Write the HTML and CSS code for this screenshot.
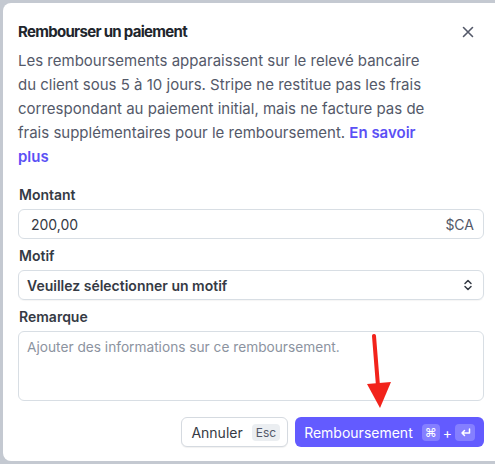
FILE: index.html
```html
<!DOCTYPE html>
<html lang="fr">
<head>
<meta charset="utf-8">
<title>Rembourser un paiement</title>
<link rel="stylesheet" href="styles.css">
</head>
<body>
<div class="dialog">
  <div class="header">
    <h1 class="title">Rembourser un paiement</h1>
    <button class="close" aria-label="Fermer">
      <svg width="12" height="12" viewBox="0 0 12 12"><path d="M1.5 1.5L10.5 10.5M10.5 1.5L1.5 10.5" stroke="#545969" stroke-width="1.6" stroke-linecap="round"/></svg>
    </button>
  </div>
  <p class="desc">Les remboursements apparaissent sur le relevé bancaire du client sous 5 à 10 jours. Stripe ne restitue pas les frais correspondant au paiement initial, mais ne facture pas de frais supplémentaires pour le remboursement. <a class="link" href="#">En savoir plus</a></p>

  <div class="field first">
    <label class="label">Montant</label>
    <div class="input">
      <span class="value">200,00</span>
      <span class="suffix">$CA</span>
    </div>
  </div>

  <div class="field">
    <label class="label">Motif</label>
    <div class="input select">
      <span class="select-text">Veuillez sélectionner un motif</span>
      <svg class="chev" width="10" height="12" viewBox="0 0 10 12"><path d="M2 4.5L5 1.5L8 4.5M2 7.5L5 10.5L8 7.5" fill="none" stroke="#353a44" stroke-width="1.5" stroke-linecap="round" stroke-linejoin="round"/></svg>
    </div>
  </div>

  <div class="field">
    <label class="label">Remarque</label>
    <div class="textarea">Ajouter des informations sur ce remboursement.</div>
  </div>

  <div class="actions">
    <button class="btn secondary">Annuler <span class="kbd">Esc</span></button>
    <button class="btn primary">Remboursement <span class="kbd light">⌘</span><span class="plus">+</span><span class="kbd light">
      <svg width="11" height="9" viewBox="0 0 11 9"><path d="M9.5 1V5H2M4.5 2.5L2 5L4.5 7.5" fill="none" stroke="#fff" stroke-width="1.5" stroke-linecap="round" stroke-linejoin="round"/></svg></span></button>
  </div>

  <svg class="arrow" width="40" height="80" viewBox="0 0 40 80"><path d="M13 2L17 52" stroke="#f2231b" stroke-width="4" stroke-linecap="round"/><path d="M6 50L30 48L19 74Z" fill="#f2231b"/></svg>
</div>
</body>
</html>
```
FILE: styles.css
```css
html, body {
  margin: 0;
  padding: 0;
}
body {
  background: #c4c9d1;
  width: 495px;
  height: 464px;
  overflow: hidden;
  font-family: Inter, "Noto Sans", sans-serif;
  color: #353a44;
}
.dialog {
  position: relative;
  box-sizing: border-box;
  margin: 3px 0 0 3px;
  width: 500px;
  height: 458px;
  background: #fff;
  border-radius: 8px;
  padding: 17px 17px 0 15px;
}
.header {
  display: flex;
  justify-content: space-between;
  align-items: center;
  width: 466px;
}
.title {
  margin: 0;
  font-size: 15px;
  line-height: 24px;
  font-weight: 700;
  letter-spacing: -0.7px;
  color: #21252c;
}
.close {
  border: 0;
  background: none;
  padding: 0;
  margin-right: 10px;
  width: 12px;
  height: 12px;
  display: flex;
}
.desc {
  margin: 5px 0 0;
  width: 418px;
  font-size: 15px;
  line-height: 24px;
  color: #545969;
}
.link {
  color: #5b50f5;
  font-weight: 600;
  text-decoration: none;
}
.field {
  display: flex;
  flex-direction: column;
  gap: 4px;
  width: 466px;
  margin-top: 7px;
}
.field.first {
  margin-top: 16px;
}
.label {
  font-size: 14px;
  line-height: 20px;
  font-weight: 600;
  color: #353a44;
  padding-left: 1px;
}
.input {
  box-sizing: border-box;
  height: 30px;
  border: 1px solid #d8dee4;
  border-radius: 6px;
  display: flex;
  align-items: center;
  justify-content: space-between;
  padding: 0 9px 0 12px;
  font-size: 14px;
  color: #353a44;
}
.suffix {
  color: #545969;
}
.select {
  padding: 0 10px 0 8px;
  box-shadow: 0 1px 1px rgba(0,0,0,0.04);
}
.select-text {
  font-weight: 600;
}
.textarea {
  box-sizing: border-box;
  height: 70px;
  border: 1px solid #d8dee4;
  border-radius: 6px;
  padding: 5px 8px;
  font-size: 13.7px;
  line-height: 20px;
  color: #8c93a0;
}
.actions {
  display: flex;
  justify-content: flex-end;
  gap: 7px;
  width: 466px;
  margin-top: 16px;
}
.btn {
  box-sizing: border-box;
  height: 30px;
  border-radius: 6px;
  display: flex;
  align-items: center;
  font-family: inherit;
  font-size: 14px;
  padding: 0 8px 0 9px;
}
.secondary {
  background: #fff;
  border: 1px solid #d5dae0;
  color: #353a44;
  box-shadow: 0 1px 1px rgba(0,0,0,0.06);
  gap: 9px;
  padding: 0 7px 0 9px;
}
.primary {
  background: #635bff;
  border: 0;
  color: #fff;
  padding: 0 9px 0 9px;
}
.kbd {
  display: inline-flex;
  align-items: center;
  justify-content: center;
  height: 17px;
  min-width: 16px;
  padding: 0 4px;
  box-sizing: border-box;
  border-radius: 4px;
  background: #ebeef1;
  color: #545969;
  font-size: 12px;
}
.kbd.light {
  background: rgba(255,255,255,0.22);
  color: #fff;
  padding: 0 3px;
}
.primary .kbd.light:first-of-type {
  margin-left: 9px;
}
.plus {
  margin: 0 3px;
  font-size: 14px;
}
.primary .kbd.light:last-child {
  width: 20px;
}
.arrow {
  position: absolute;
  left: 358px;
  top: 331px;
}
```
